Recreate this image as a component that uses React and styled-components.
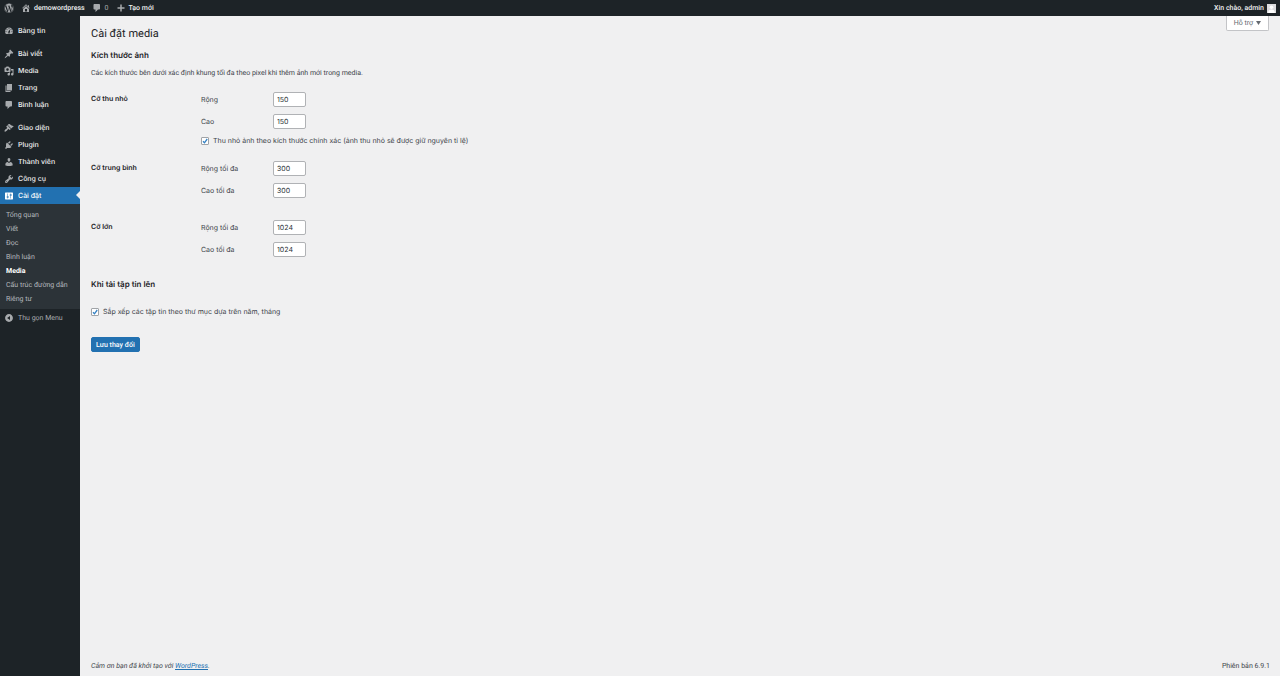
import React from "react";
import styled, { createGlobalStyle, css } from "styled-components";
import { FaWordpress } from "react-icons/fa";

const compact = `Roboto, "Liberation Sans", sans-serif`;

const GlobalStyle = createGlobalStyle`
  *, *::before, *::after { box-sizing: border-box; }
  body {
    margin: 0;
    background: #f0f0f1;
    color: #3c434a;
    font-family: Inter, "Liberation Sans", sans-serif;
    font-size: 7px;
    line-height: 10px;
    text-rendering: geometricPrecision;
  }
  button, input { font: inherit; color: inherit; text-rendering: inherit; }
  h1, h2, h3, p, ul { margin: 0; padding: 0; }
  ul { list-style: none; }
`;

const icons = {
  dashboard:
    "M3.76 16h12.48c1.1-1.37 1.76-3.11 1.76-5 0-4.42-3.58-8-8-8s-8 3.58-8 8c0 1.89.66 3.63 1.76 5zM10 4c.55 0 1 .45 1 1s-.45 1-1 1-1-.45-1-1 .45-1 1-1zM6 6c.55 0 1 .45 1 1s-.45 1-1 1-1-.45-1-1 .45-1 1-1zm8 0c.55 0 1 .45 1 1s-.45 1-1 1-1-.45-1-1 .45-1 1-1zm-5.37 5.55L12 7v6c0 1.1-.9 2-2 2s-2-.9-2-2c0-.57.24-1.08.63-1.45zM4 10c.55 0 1 .45 1 1s-.45 1-1 1-1-.45-1-1 .45-1 1-1zm12 0c.55 0 1 .45 1 1s-.45 1-1 1-1-.45-1-1 .45-1 1-1zm-5 3c0-.55-.45-1-1-1s-1 .45-1 1 .45 1 1 1 1-.45 1-1z",
  pin: "M10.44 3.02l1.82-1.82 6.36 6.35-1.83 1.82c-1.05-.68-2.48-.57-3.41.36l-.75.75c-.92.93-1.04 2.35-.35 3.41l-1.83 1.82-2.41-2.41-2.8 2.79c-.42.42-3.38 2.71-3.8 2.29s1.86-3.39 2.28-3.81l2.79-2.79L4.1 9.36l1.83-1.82c1.05.69 2.48.57 3.4-.36l.75-.75c.93-.92 1.05-2.35.36-3.41z",
  media:
    "M13 11V4c0-.55-.45-1-1-1h-1.67L9 1H5L3.67 3H2c-.55 0-1 .45-1 1v7c0 .55.45 1 1 1h10c.55 0 1-.45 1-1zM7 4.5c1.38 0 2.5 1.12 2.5 2.5S8.38 9.5 7 9.5 4.5 8.38 4.5 7 5.62 4.5 7 4.5zM14 6h5v10.5c0 1.38-1.12 2.5-2.5 2.5S14 17.88 14 16.5s1.12-2.5 2.5-2.5c.17 0 .34.02.5.05V9h-3V6zm-4 8.05V13h2v3.5c0 1.38-1.12 2.5-2.5 2.5S7 17.88 7 16.5 8.12 14 9.5 14c.17 0 .34.02.5.05z",
  page: "M6 15V2h10v13H6zm-1 1h8v2H3V5h2v11z",
  comment:
    "M5 2h9c1.1 0 2 .9 2 2v7c0 1.1-.9 2-2 2h-2l-5 5v-5H5c-1.1 0-2-.9-2-2V4c0-1.1.9-2 2-2z",
  appearance:
    "M14.48 11.06L7.41 3.99l1.5-1.5c.5-.56 2.3-.47 3.51.32 1.21.8 1.43 1.28 2.91 2.1 1.18.64 2.45 1.26 4.45.85zm-.71.71L6.7 4.7 4.93 6.47c-.39.39-.39 1.02 0 1.41l1.06 1.06c.39.39.39 1.03 0 1.42-.6.6-1.43 1.11-2.21 1.69-.35.26-.7.53-1.01.84C1.43 14.23.4 16.08 1.4 17.07c.99 1 2.84-.03 4.18-1.36.31-.31.58-.66.85-1.02.57-.78 1.08-1.61 1.69-2.21.39-.39 1.02-.39 1.41 0l1.06 1.06c.39.39 1.02.39 1.41 0z",
  plugin:
    "M13.11 4.36L9.87 7.6 8 5.73l3.24-3.24c.35-.34 1.05-.2 1.56.32.52.51.66 1.21.31 1.55zm-8 1.77l.91-1.12 9.01 9.01-1.19.84c-.71.71-2.63 1.16-3.82 1.16H6.14L4.9 17.26c-.59.59-1.54.59-2.12 0-.59-.58-.59-1.53 0-2.12l1.24-1.24v-3.88c0-1.13.4-3.19 1.09-3.89zm7.26 3.97l3.24-3.24c.34-.35 1.04-.21 1.55.31.52.51.66 1.21.31 1.55l-3.24 3.25z",
  user: "M10 9.25c-2.27 0-2.73-3.44-2.73-3.44C7 4.02 7.82 2 9.97 2c2.16 0 2.98 2.02 2.71 3.81 0 0-.41 3.44-2.68 3.44zm0 2.57L12.72 10c2.39 0 4.52 2.33 4.52 4.53v2.49s-3.65 1.13-7.24 1.13c-3.65 0-7.24-1.13-7.24-1.13v-2.49c0-2.25 1.94-4.48 4.47-4.48z",
  tools:
    "M16.68 9.77c-1.34 1.34-3.3 1.67-4.95.99l-5.41 6.52c-.99.99-2.59.99-3.58 0s-.99-2.59 0-3.57l6.52-5.42c-.68-1.65-.35-3.61.99-4.95 1.28-1.28 3.12-1.62 4.72-1.06l-2.89 2.89 2.82 2.82 2.86-2.87c.53 1.58.18 3.39-1.08 4.65zM3.81 16.21c.4.39 1.04.39 1.43 0 .4-.4.4-1.04 0-1.43-.39-.4-1.03-.4-1.43 0-.39.39-.39 1.03 0 1.43z",
  settings:
    "M18 16V4c0-.55-.45-1-1-1H3c-.55 0-1 .45-1 1v12c0 .55.45 1 1 1h14c.55 0 1-.45 1-1zM8 11h1c.55 0 1 .45 1 1s-.45 1-1 1H8v1.5c0 .28-.22.5-.5.5s-.5-.22-.5-.5V13H6c-.55 0-1-.45-1-1s.45-1 1-1h1V5.5c0-.28.22-.5.5-.5s.5.22.5.5V11zm5-2h-1c-.55 0-1-.45-1-1s.45-1 1-1h1V5.5c0-.28.22-.5.5-.5s.5.22.5.5V7h1c.55 0 1 .45 1 1s-.45 1-1 1h-1v5.5c0 .28-.22.5-.5.5s-.5-.22-.5-.5V9z",
  home: "M16 8.5l1.53 1.53-1.06 1.06L10 4.6l-6.47 6.49-1.06-1.06L10 2.5l4 4v-2h2v4zm-6-2.46l6 5.99V18H4v-5.97zM12 17v-5H8v5h4z",
  collapse:
    "M10 2.16c4.33 0 7.84 3.51 7.84 7.84s-3.51 7.84-7.84 7.84S2.16 14.33 2.16 10 5.67 2.16 10 2.16zm2 11.72V6.12L6.18 9.97z",
  plus: "M17 8.5v3h-5.500v5.500h-3v-5.500H3v-3h5.500V3h3v5.500z",
};

const IconSvg = styled.svg`
  flex: none;
  width: 10px;
  height: 10px;
  fill: ${(p) => p.$color || "#a7aaad"};
`;

const Icon = ({ name, color }) => (
  <IconSvg viewBox="0 0 20 20" $color={color} fillRule="evenodd" aria-hidden="true">
    <path d={icons[name]} />
  </IconSvg>
);

/* Frame */

const Page = styled.div`
  display: flex;
  flex-direction: column;
  min-height: 100vh;
`;

const AdminBar = styled.header`
  display: flex;
  align-items: center;
  justify-content: space-between;
  height: 16px;
  padding: 0 4px;
  background: #1d2327;
  color: #f0f0f1;
  font-family: ${compact};
`;

const BarGroup = styled.nav`
  display: flex;
  align-items: center;
  gap: 7px;
`;

const BarLink = styled.a`
  display: flex;
  align-items: center;
  gap: 3px;
  color: ${(p) => (p.$muted ? "#a7aaad" : "#f0f0f1")};
  font-weight: ${(p) => (p.$muted ? 400 : 500)};
  text-decoration: none;
`;

const Logo = styled(FaWordpress)`
  width: 10px;
  height: 10px;
  color: #a7aaad;
`;

const Avatar = styled.svg`
  width: 9px;
  height: 9px;
`;

const Columns = styled.div`
  display: flex;
  flex: 1;
`;

/* Side menu */

const Sidebar = styled.nav`
  flex: none;
  width: 80px;
  padding-top: 6px;
  background: #1d2327;
`;

const MenuGroup = styled.ul`
  margin-bottom: ${(p) => (p.$last ? 0 : 6)}px;
`;

const MenuLink = styled.a`
  position: relative;
  display: flex;
  align-items: center;
  gap: 4px;
  height: 17px;
  padding-left: 4px;
  color: #f0f0f1;
  font-weight: 500;
  text-decoration: none;
  ${(p) =>
    p.$current &&
    css`
      background: #2271b1;
      color: #fff;
      &::after {
        content: "";
        position: absolute;
        right: 0;
        top: 4px;
        border: 4px solid transparent;
        border-left: 0;
        border-right-color: #f0f0f1;
      }
    `}
`;

const SubMenu = styled.ul`
  padding: 4px 0 3px;
  background: #2c3338;
  font-family: ${compact};
`;

const SubLink = styled.a`
  display: block;
  padding: 2px 6px;
  color: ${(p) => (p.$current ? "#fff" : "#b4b9be")};
  font-weight: ${(p) => (p.$current ? 700 : 400)};
  text-decoration: none;
  white-space: nowrap;
`;

const CollapseButton = styled.button`
  display: flex;
  align-items: center;
  gap: 4px;
  width: 100%;
  height: 17px;
  padding: 0 0 0 4px;
  border: 0;
  background: none;
  color: #a7aaad;
  font-family: ${compact};
`;

/* Content */

const Content = styled.div`
  display: flex;
  flex: 1;
  flex-direction: column;
  min-width: 0;
  padding: 0 10px 0 11px;
`;

const TopRow = styled.div`
  display: flex;
  align-items: flex-start;
  justify-content: space-between;
`;

const PageTitle = styled.h1`
  padding-top: 10px;
  color: #1d2327;
  font-family: ${compact};
  font-size: 11px;
  font-weight: 400;
  line-height: 16px;
`;

const HelpButton = styled.button`
  display: flex;
  align-items: center;
  gap: 3px;
  height: 15px;
  padding: 0 7px;
  border: 1px solid #c3c4c7;
  border-top: 0;
  border-radius: 0 0 2px 2px;
  background: #fff;
  color: #646970;
  font-family: ${compact};
  margin-right: 1px;
`;

const Caret = styled.svg`
  width: 5px;
  height: 4px;
  fill: #646970;
`;

const SectionTitle = styled.h2`
  color: #1d2327;
  font-size: 8px;
  font-weight: 600;
  line-height: 12px;
  margin-top: ${(p) => p.$top}px;
`;

const Intro = styled.p`
  margin-top: 7px;
  font-family: ${compact};
`;

const SettingRow = styled.div`
  display: grid;
  grid-template-columns: 110px 1fr;
  margin-top: ${(p) => p.$top}px;
`;

const SettingName = styled.h3`
  padding-top: 2px;
  color: #1d2327;
  font-size: 7px;
  font-weight: 600;
`;

const Fields = styled.div`
  display: flex;
  flex-direction: column;
  gap: 7px;
`;

const Field = styled.label`
  display: grid;
  grid-template-columns: 72px 33px;
  align-items: center;
`;

const NumberInput = styled.input`
  width: 100%;
  height: 15px;
  padding: 0 3px;
  border: 1px solid #b0b2b5;
  border-radius: 2px;
  background: #fff;
  color: #2c3338;
  appearance: textfield;
  &::-webkit-inner-spin-button { appearance: none; margin: 0; }
`;

const CheckLabel = styled.label`
  display: flex;
  align-items: center;
  gap: 4px;
  margin-top: ${(p) => p.$top || 0}px;
`;

const CheckBox = styled.span`
  position: relative;
  display: block;
  width: 8px;
  height: 8px;
`;

const CheckInput = styled.input`
  display: block;
  width: 8px;
  height: 8px;
  margin: 0;
  border: 1px solid #a0a3a7;
  border-radius: 1px;
  background: #fff;
  appearance: none;
`;

const CheckMark = styled.svg`
  position: absolute;
  inset: 0;
  width: 8px;
  height: 8px;
  pointer-events: none;
  visibility: hidden;
  ${CheckInput}:checked + & { visibility: visible; }
`;

const SaveButton = styled.button`
  align-self: flex-start;
  height: 15px;
  margin-top: 20px;
  padding: 0 4px;
  border: 1px solid #2271b1;
  border-radius: 2px;
  background: #2271b1;
  color: #fff;
  font-family: ${compact};
  font-weight: 500;
`;

const Form = styled.form`
  display: flex;
  flex-direction: column;
`;

const Footer = styled.footer`
  display: flex;
  justify-content: space-between;
  margin-top: auto;
  padding-bottom: 5px;
  font-family: ${compact};
`;

const FooterLink = styled.a`
  color: #2271b1;
`;

const menu = [
  [{ icon: "dashboard", label: "Bảng tin" }],
  [
    { icon: "pin", label: "Bài viết" },
    { icon: "media", label: "Media" },
    { icon: "page", label: "Trang" },
    { icon: "comment", label: "Bình luận" },
  ],
  [
    { icon: "appearance", label: "Giao diện" },
    { icon: "plugin", label: "Plugin" },
    { icon: "user", label: "Thành viên" },
    { icon: "tools", label: "Công cụ" },
    { icon: "settings", label: "Cài đặt", current: true },
  ],
];

const subMenu = ["Tổng quan", "Viết", "Đọc", "Bình luận", "Media", "Cấu trúc đường dẫn", "Riêng tư"];

const sizes = [
  {
    name: "Cỡ thu nhỏ",
    top: 14,
    fields: [["Rộng", 150], ["Cao", 150]],
    check: "Thu nhỏ ảnh theo kích thước chính xác (ảnh thu nhỏ sẽ được giữ nguyên tỉ lệ)",
  },
  { name: "Cỡ trung bình", top: 15, fields: [["Rộng tối đa", 300], ["Cao tối đa", 300]] },
  { name: "Cỡ lớn", top: 22, fields: [["Rộng tối đa", 1024], ["Cao tối đa", 1024]] },
];

const Check = ({ children, top }) => (
  <CheckLabel $top={top}>
    <CheckBox>
      <CheckInput type="checkbox" defaultChecked />
      <CheckMark viewBox="0 0 8 8" aria-hidden="true">
        <path d="M2 4.200L3.500 5.800L6.200 2" fill="none" stroke="#3582c4" strokeWidth="1.300" />
      </CheckMark>
    </CheckBox>
    {children}
  </CheckLabel>
);

export default function App() {
  return (
    <Page>
      <GlobalStyle />
      <AdminBar>
        <BarGroup>
          <BarLink href="#" aria-label="WordPress"><Logo /></BarLink>
          <BarLink href="#"><Icon name="home" />demowordpress</BarLink>
          <BarLink href="#" $muted><Icon name="comment" />0</BarLink>
          <BarLink href="#"><Icon name="plus" />Tạo mới</BarLink>
        </BarGroup>
        <BarLink href="#">
          Xin chào, admin
          <Avatar viewBox="0 0 9 9" aria-hidden="true">
            <rect width="9" height="9" fill="#dcdcde" />
            <circle cx="4.500" cy="3.300" r="1.800" fill="#fff" />
            <path d="M1.200 9c0-2.400 1.300-3.400 3.300-3.400S7.800 6.600 7.800 9z" fill="#fff" />
          </Avatar>
        </BarLink>
      </AdminBar>
      <Columns>
        <Sidebar>
          {menu.map((group, i) => (
            <MenuGroup key={i} $last={i === menu.length - 1}>
              {group.map((item) => (
                <li key={item.label}>
                  <MenuLink href="#" $current={item.current}>
                    <Icon name={item.icon} color={item.current && "#fff"} />
                    {item.label}
                  </MenuLink>
                  {item.current && (
                    <SubMenu>
                      {subMenu.map((s) => (
                        <li key={s}><SubLink href="#" $current={s === "Media"}>{s}</SubLink></li>
                      ))}
                    </SubMenu>
                  )}
                </li>
              ))}
            </MenuGroup>
          ))}
          <CollapseButton type="button"><Icon name="collapse" />Thu gọn Menu</CollapseButton>
        </Sidebar>
        <Content>
          <TopRow>
            <PageTitle>Cài đặt media</PageTitle>
            <HelpButton type="button">
              Hỗ trợ
              <Caret viewBox="0 0 5 4" aria-hidden="true"><path d="M0 0h5L2.500 4z" /></Caret>
            </HelpButton>
          </TopRow>
          <Form onSubmit={(e) => e.preventDefault()}>
            <SectionTitle $top={7}>Kích thước ảnh</SectionTitle>
            <Intro>Các kích thước bên dưới xác định khung tối đa theo pixel khi thêm ảnh mới trong media.</Intro>
            {sizes.map((row) => (
              <SettingRow key={row.name} $top={row.top}>
                <SettingName>{row.name}</SettingName>
                <Fields>
                  {row.fields.map(([label, value]) => (
                    <Field key={label}>
                      {label}
                      <NumberInput type="number" defaultValue={value} />
                    </Field>
                  ))}
                  {row.check && <Check>{row.check}</Check>}
                </Fields>
              </SettingRow>
            ))}
            <SectionTitle $top={21}>Khi tải tập tin lên</SectionTitle>
            <Check top={17}>Sắp xếp các tập tin theo thư mục dựa trên năm, tháng</Check>
            <SaveButton type="submit">Lưu thay đổi</SaveButton>
          </Form>
          <Footer>
            <em>Cảm ơn bạn đã khởi tạo với <FooterLink href="#">WordPress</FooterLink>.</em>
            <span>Phiên bản 6.9.1</span>
          </Footer>
        </Content>
      </Columns>
    </Page>
  );
}
